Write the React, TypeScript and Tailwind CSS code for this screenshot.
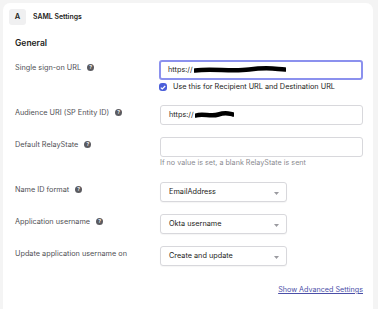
import React from "react";

const Help = () => (
  <span className="inline-flex items-center justify-center w-[7px] h-[7px] rounded-full bg-[#5b5b60] text-white text-[5px] font-bold leading-none ml-[6px] align-middle relative top-[-1px]">
    ?
  </span>
);

const Caret = () => (
  <svg width="5" height="3" viewBox="0 0 5 3" className="absolute right-[7px] top-[9px]">
    <path d="M0 0 L5 0 L2.5 3 Z" fill="#9a9aa0" />
  </svg>
);

const Scribble = ({ w }: { w: number }) => (
  <svg width={w} height="8" viewBox={`0 0 ${w} 8`} className="ml-[1px]">
    <path
      d={`M1 4.5 C ${w * 0.2} 2, ${w * 0.4} 6, ${w * 0.6} 3.5 S ${w * 0.85} 2.5, ${w - 1} 3.5`}
      stroke="#000"
      strokeWidth="4.5"
      strokeLinecap="round"
      fill="none"
    />
  </svg>
);

const Select = ({ value }: { value: string }) => (
  <div className="relative w-[127px] h-[20px] border border-[#d8d8dc] rounded-[3px] bg-white flex items-center pl-[8px] text-[7.3px] text-[#1d1d21] shadow-[0_1px_1px_rgba(0,0,0,0.04)]">
    {value}
    <Caret />
  </div>
);

const labelCls = "w-[145px] pt-[3px] text-[7.3px] text-[#505055] leading-[10px]";

export default function App() {
  return (
    <div
      className="w-[378px] h-[309px] bg-[#f4f4f4] pt-[3px] pl-[3px] pr-[5px] overflow-hidden"
      style={{ fontFamily: "Inter, 'Noto Sans', sans-serif" }}
    >
      <div className="bg-white rounded-t-[7px] h-[306px] w-[370px]">
        <div className="flex items-center pt-[6px] pl-[6px]">
          <div className="w-[17px] h-[16px] bg-[#f0f0f1] rounded-[3px] flex items-center justify-center text-[7.5px] font-semibold text-[#1d1d21]">
            A
          </div>
          <div className="ml-[7px] text-[6.9px] font-semibold text-[#1d1d21]">SAML Settings</div>
        </div>

        <div className="pl-[12px] pr-[10px]">
          <div className="mt-[12px] text-[8.5px] font-semibold text-[#1d1d21] leading-[12px]">General</div>

          {/* Row 1 */}
          <div className="flex mt-[11px]">
            <div className={labelCls}>
              Single sign-on URL
              <Help />
            </div>
            <div>
              <div className="w-[204px] h-[20px] border-2 border-[#8b91ee] rounded-[3px] flex items-center pl-[7px] text-[7.3px] text-[#1d1d21]">
                https://
                <Scribble w={92} />
              </div>
              <div className="flex items-center mt-[2px]">
                <div className="w-[8px] h-[8px] rounded-[3px] bg-[#4b5fd9] flex items-center justify-center">
                  <svg width="6" height="5" viewBox="0 0 6 5">
                    <path d="M0.8 2.6 L2.3 4 L5.2 1" stroke="#fff" strokeWidth="1.2" fill="none" />
                  </svg>
                </div>
                <span className="ml-[6px] text-[7.3px] text-[#1d1d21] leading-[10px]">
                  Use this for Recipient URL and Destination URL
                </span>
              </div>
            </div>
          </div>

          {/* Row 2 */}
          <div className="flex mt-[13px]">
            <div className={labelCls}>
              Audience URI (SP Entity ID)
              <Help />
            </div>
            <div className="w-[203px] h-[20px] border border-[#d8d8dc] rounded-[3px] flex items-center pl-[8px] text-[7.3px] text-[#1d1d21]">
              https://
              <Scribble w={39} />
            </div>
          </div>

          {/* Row 3 */}
          <div className="flex mt-[12px]">
            <div className={labelCls}>
              Default RelayState
              <Help />
            </div>
            <div>
              <div className="w-[203px] h-[20px] border border-[#d8d8dc] rounded-[3px]" />
              <div className="mt-[1px] text-[7.2px] text-[#8a8a8f] leading-[10px]">
                If no value is set, a blank RelayState is sent
              </div>
            </div>
          </div>

          {/* Row 4 */}
          <div className="flex mt-[14px]">
            <div className={labelCls}>
              Name ID format
              <Help />
            </div>
            <Select value="EmailAddress" />
          </div>

          {/* Row 5 */}
          <div className="flex mt-[12px]">
            <div className={labelCls}>
              Application username
              <Help />
            </div>
            <Select value="Okta username" />
          </div>

          {/* Row 6 */}
          <div className="flex mt-[12px]">
            <div className={labelCls}>
              Update application username on
            </div>
            <Select value="Create and update" />
          </div>

          <div className="flex justify-end w-[348px] mt-[19px]">
            <span className="text-[7.2px] text-[#4b4fa8] underline leading-[10px]">Show Advanced Settings</span>
          </div>
        </div>
      </div>
    </div>
  );
}
